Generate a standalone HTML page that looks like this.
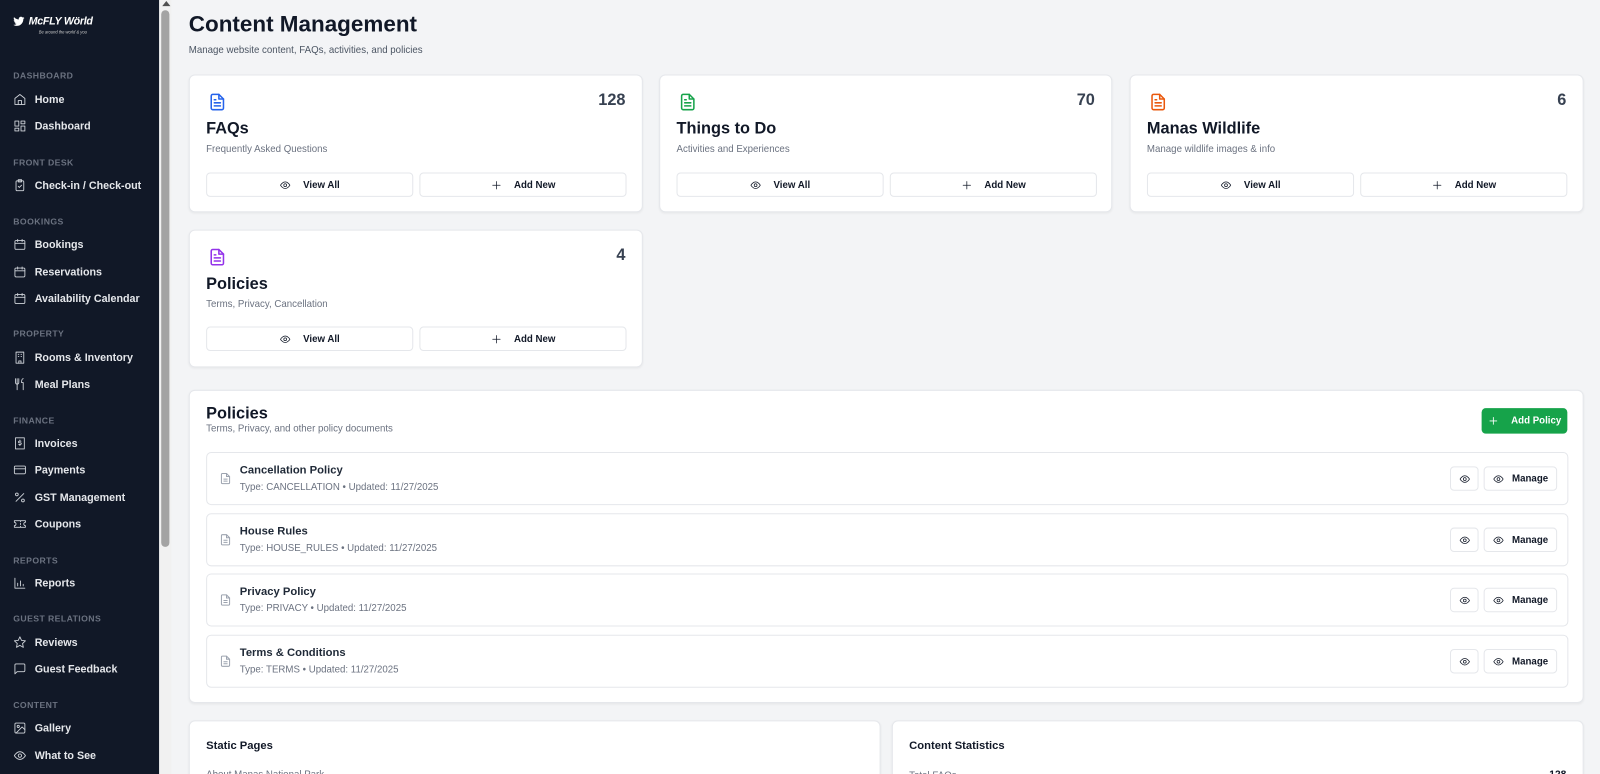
<!DOCTYPE html>
<html><head><meta charset="utf-8"><style>
*{box-sizing:border-box;margin:0;padding:0}
html,body{width:1600px;height:774px;overflow:hidden;background:#f3f4f6}
body{font-family:"Liberation Sans",sans-serif;color:#111827;position:relative}
#w{position:absolute;left:0;top:0;width:1568px;height:760px;transform:scale(1.0204);transform-origin:0 0}
.sb{position:absolute;left:0;top:0;width:156px;height:774px;background:#111827;color:#e5e7eb}
.sec{position:absolute;left:13px;font-size:8.5px;font-weight:700;color:#6b7280;letter-spacing:.4px}
.it{position:absolute;left:13px;font-size:10.5px;font-weight:700;color:#e5e7eb;display:flex;align-items:center;gap:8px}
.it svg{width:13px;height:13px;fill:none;stroke:#d1d5db;stroke-width:1.6;stroke-linecap:round;stroke-linejoin:round}
.scroll{position:absolute;left:156px;top:0;width:12px;height:774px;background:#f1f1f1}
.thumb{position:absolute;left:158px;top:10px;width:8px;height:526px;background:#a3a3a3;border-radius:4px}
.card{position:absolute;background:#fff;border:1px solid #e5e7eb;border-radius:6px;box-shadow:0 1px 2px rgba(0,0,0,.05)}
.num{position:absolute;right:16px;top:16px;font-size:16px;font-weight:700;color:#374151}
.ct{position:absolute;left:16px;top:44px;font-size:16px;font-weight:700}
.cs{position:absolute;left:16px;top:67px;font-size:9.5px;color:#6b7280}
.btn{position:absolute;height:24px;border:1px solid #e5e7eb;border-radius:4px;background:#fff;font-size:9.5px;font-weight:700;display:flex;align-items:center;justify-content:center;gap:12px;color:#111827}
.btn svg{width:11px;height:11px;fill:none;stroke:#111827;stroke-width:1.6;stroke-linecap:round}
.doc{position:absolute;left:18px;top:16px;width:18px;height:20px}
.row{position:absolute;left:16px;width:1335px;height:52px;border:1px solid #e5e7eb;border-radius:5px}
.rt{position:absolute;left:32px;top:11px;font-size:11px;font-weight:700;color:#1f2937}
.rs{position:absolute;left:32px;top:28px;font-size:9.5px;color:#6b7280}
.ri{position:absolute;left:12px;top:18px}
.eb{position:absolute;top:13px;height:24px;border:1px solid #e5e7eb;border-radius:4px;display:flex;align-items:center;justify-content:center;gap:8px;font-size:9.5px;font-weight:700}
.eb svg{width:11px;height:11px;fill:none;stroke:#111827;stroke-width:1.6}
</style></head><body><div id="w">
<div class="sb">
 <div style="position:absolute;left:13px;top:15px;display:flex;align-items:center;gap:4px">
  <svg width="11" height="10" viewBox="0 0 24 20"><path fill="#fff" d="M24 2.4c-.9.4-1.8.7-2.8.8 1-.6 1.8-1.6 2.2-2.7-1 .6-2 1-3.1 1.2C19.3.7 18 0 16.6 0c-2.7 0-4.9 2.200-4.9 4.9 0 .4 0 .8.1 1.1C7.7 5.8 4.1 3.900 1.7.9c-.4.7-.7 1.600-.7 2.500 0 1.700.9 3.200 2.200 4.100-.8 0-1.600-.2-2.200-.6v.1c0 2.400 1.700 4.400 3.900 4.800-.4.1-.8.2-1.300.2-.3 0-.6 0-.9-.1.6 2 2.400 3.400 4.600 3.400-1.700 1.300-3.800 2.100-6.100 2.100H0c2.200 1.400 4.800 2.200 7.500 2.200 9.100 0 14-7.500 14-14v-.6c1-.7 1.800-1.600 2.500-2.600z"/></svg>
  <span style="font-size:10.5px;font-weight:700;font-style:italic;color:#fff;letter-spacing:-.3px">McFLY Wörld</span>
 </div>
 <div style="position:absolute;left:38px;top:29px;font-size:4px;color:#ccc;font-style:italic">Be around the world &amp; you</div>
 <div class="sec" style="top:69px">DASHBOARD</div>
 <div class="it" style="top:91px"><svg viewBox="0 0 24 24"><path d="M3 10l9-7 9 7v11H3z"/><path d="M9 21v-7h6v7"/></svg>Home</div>
 <div class="it" style="top:117px"><svg viewBox="0 0 24 24"><rect x="3" y="3" width="7" height="9"/><rect x="14" y="3" width="7" height="5"/><rect x="14" y="12" width="7" height="9"/><rect x="3" y="16" width="7" height="5"/></svg>Dashboard</div>
 <div class="sec" style="top:154px">FRONT DESK</div>
 <div class="it" style="top:175px"><svg viewBox="0 0 24 24"><rect x="5" y="4" width="14" height="18" rx="2"/><path d="M9 2h6v4H9zM9 14l2 2 4-4"/></svg>Check-in / Check-out</div>
 <div class="sec" style="top:212px">BOOKINGS</div>
 <div class="it" style="top:233px"><svg viewBox="0 0 24 24"><rect x="3" y="5" width="18" height="16" rx="2"/><path d="M8 3v4M16 3v4M3 10h18"/></svg>Bookings</div>
 <div class="it" style="top:260px"><svg viewBox="0 0 24 24"><rect x="3" y="5" width="18" height="16" rx="2"/><path d="M8 3v4M16 3v4M3 10h18"/></svg>Reservations</div>
 <div class="it" style="top:286px"><svg viewBox="0 0 24 24"><rect x="3" y="5" width="18" height="16" rx="2"/><path d="M8 3v4M16 3v4M3 10h18"/></svg>Availability Calendar</div>
 <div class="sec" style="top:322px">PROPERTY</div>
 <div class="it" style="top:344px"><svg viewBox="0 0 24 24"><rect x="5" y="2" width="14" height="20"/><path d="M10 22v-4h4v4M9 6h1M14 6h1M9 10h1M14 10h1"/></svg>Rooms &amp; Inventory</div>
 <div class="it" style="top:370px"><svg viewBox="0 0 24 24"><path d="M4 2v7a3 3 0 006 0V2M7 2v20M18 2c-2 0-3 3-3 7h3v13"/></svg>Meal Plans</div>
 <div class="sec" style="top:407px">FINANCE</div>
 <div class="it" style="top:428px"><svg viewBox="0 0 24 24"><rect x="4" y="2" width="16" height="20"/><path d="M14 8h-3a1.5 1.5 0 000 3h2a1.5 1.5 0 010 3h-3M12 6v2M12 14v2"/></svg>Invoices</div>
 <div class="it" style="top:454px"><svg viewBox="0 0 24 24"><rect x="2" y="5" width="20" height="14" rx="2"/><path d="M2 10h20"/></svg>Payments</div>
 <div class="it" style="top:481px"><svg viewBox="0 0 24 24"><path d="M19 5L5 19"/><circle cx="6.5" cy="6.5" r="2.5"/><circle cx="17.5" cy="17.5" r="2.5"/></svg>GST Management</div>
 <div class="it" style="top:507px"><svg viewBox="0 0 24 24"><path d="M2 9a3 3 0 010 6v3h20v-3a3 3 0 010-6V6H2zM13 6v2M13 16v2M13 11v2"/></svg>Coupons</div>
 <div class="sec" style="top:544px">REPORTS</div>
 <div class="it" style="top:565px"><svg viewBox="0 0 24 24"><path d="M3 3v18h18M8 17v-5M13 17V8M18 17v-3"/></svg>Reports</div>
 <div class="sec" style="top:601px">GUEST RELATIONS</div>
 <div class="it" style="top:623px"><svg viewBox="0 0 24 24"><path d="M12 2l3 6.5 7 .8-5.2 4.8 1.4 7L12 17.5 5.8 21l1.4-7L2 9.3l7-.8z"/></svg>Reviews</div>
 <div class="it" style="top:649px"><svg viewBox="0 0 24 24"><path d="M21 15a2 2 0 01-2 2H7l-4 4V5a2 2 0 012-2h14a2 2 0 012 2z"/></svg>Guest Feedback</div>
 <div class="sec" style="top:686px">CONTENT</div>
 <div class="it" style="top:707px"><svg viewBox="0 0 24 24"><rect x="3" y="3" width="18" height="18" rx="2"/><circle cx="9" cy="9" r="2"/><path d="M21 15l-5-5L5 21"/></svg>Gallery</div>
 <div class="it" style="top:734px"><svg viewBox="0 0 24 24"><path d="M2 12s4-7 10-7 10 7 10 7-4 7-10 7S2 12 2 12z"/><circle cx="12" cy="12" r="3"/></svg>What to See</div>
</div>
<div class="scroll"></div><div class="thumb"></div>
<div style="position:absolute;left:159px;top:1px;width:0;height:0;border-left:4px solid transparent;border-right:4px solid transparent;border-bottom:5px solid #505050"></div>

<div style="position:absolute;left:185px;top:11px;font-size:22px;font-weight:700">Content Management</div>
<div style="position:absolute;left:185px;top:44px;font-size:9.5px;color:#4b5563">Manage website content, FAQs, activities, and policies</div>

<div class="card" style="left:185px;top:73px;width:445px;height:135px">
 <svg class="doc" viewBox="0 0 24 24" fill="none" stroke="#2563eb" stroke-width="2" stroke-linecap="round" stroke-linejoin="round"><path d="M14 2H6a2 2 0 00-2 2v16a2 2 0 002 2h12a2 2 0 002-2V8z"/><path d="M14 2v6h6M8 13h8M8 17h8M8 9h2"/></svg>
 <div class="num">128</div><div class="ct">FAQs</div><div class="cs">Frequently Asked Questions</div>
 <div class="btn" style="left:16px;top:95px;width:203px"><svg viewBox="0 0 24 24"><path d="M2 12s4-7 10-7 10 7 10 7-4 7-10 7S2 12 2 12z"/><circle cx="12" cy="12" r="3"/></svg>View All</div>
 <div class="btn" style="left:225px;top:95px;width:203px"><svg viewBox="0 0 24 24"><path d="M12 4v16M4 12h16"/></svg>Add New</div>
</div>
<div class="card" style="left:646px;top:73px;width:444px;height:135px">
 <svg class="doc" viewBox="0 0 24 24" fill="none" stroke="#16a34a" stroke-width="2" stroke-linecap="round" stroke-linejoin="round"><path d="M14 2H6a2 2 0 00-2 2v16a2 2 0 002 2h12a2 2 0 002-2V8z"/><path d="M14 2v6h6M8 13h8M8 17h8M8 9h2"/></svg>
 <div class="num">70</div><div class="ct">Things to Do</div><div class="cs">Activities and Experiences</div>
 <div class="btn" style="left:16px;top:95px;width:203px"><svg viewBox="0 0 24 24"><path d="M2 12s4-7 10-7 10 7 10 7-4 7-10 7S2 12 2 12z"/><circle cx="12" cy="12" r="3"/></svg>View All</div>
 <div class="btn" style="left:225px;top:95px;width:203px"><svg viewBox="0 0 24 24"><path d="M12 4v16M4 12h16"/></svg>Add New</div>
</div>
<div class="card" style="left:1107px;top:73px;width:445px;height:135px">
 <svg class="doc" viewBox="0 0 24 24" fill="none" stroke="#ea580c" stroke-width="2" stroke-linecap="round" stroke-linejoin="round"><path d="M14 2H6a2 2 0 00-2 2v16a2 2 0 002 2h12a2 2 0 002-2V8z"/><path d="M14 2v6h6M8 13h8M8 17h8M8 9h2"/></svg>
 <div class="num">6</div><div class="ct">Manas Wildlife</div><div class="cs">Manage wildlife images &amp; info</div>
 <div class="btn" style="left:16px;top:95px;width:203px"><svg viewBox="0 0 24 24"><path d="M2 12s4-7 10-7 10 7 10 7-4 7-10 7S2 12 2 12z"/><circle cx="12" cy="12" r="3"/></svg>View All</div>
 <div class="btn" style="left:225px;top:95px;width:203px"><svg viewBox="0 0 24 24"><path d="M12 4v16M4 12h16"/></svg>Add New</div>
</div>
<div class="card" style="left:185px;top:225px;width:445px;height:135px">
 <svg class="doc" viewBox="0 0 24 24" fill="none" stroke="#9333ea" stroke-width="2" stroke-linecap="round" stroke-linejoin="round"><path d="M14 2H6a2 2 0 00-2 2v16a2 2 0 002 2h12a2 2 0 002-2V8z"/><path d="M14 2v6h6M8 13h8M8 17h8M8 9h2"/></svg>
 <div class="num">4</div><div class="ct">Policies</div><div class="cs">Terms, Privacy, Cancellation</div>
 <div class="btn" style="left:16px;top:94px;width:203px"><svg viewBox="0 0 24 24"><path d="M2 12s4-7 10-7 10 7 10 7-4 7-10 7S2 12 2 12z"/><circle cx="12" cy="12" r="3"/></svg>View All</div>
 <div class="btn" style="left:225px;top:94px;width:203px"><svg viewBox="0 0 24 24"><path d="M12 4v16M4 12h16"/></svg>Add New</div>
</div>

<div class="card" style="left:185px;top:382px;width:1367px;height:307px">
 <div style="position:absolute;left:16px;top:14px;font-size:16px;font-weight:700">Policies</div>
 <div style="position:absolute;left:16px;top:32px;font-size:9.5px;color:#6b7280">Terms, Privacy, and other policy documents</div>
 <div style="position:absolute;right:15px;top:17px;width:84px;height:25px;background:#16a34a;border-radius:4px;color:#fff;font-size:9.5px;font-weight:700;display:flex;align-items:center;justify-content:center;gap:12px"><svg width="11" height="11" viewBox="0 0 24 24" fill="none" stroke="#fff" stroke-width="1.8"><path d="M12 4v16M4 12h16"/></svg>Add Policy</div>
 <div class="row" style="top:60px"><svg class="ri" width="12" height="14" viewBox="0 0 24 24" fill="none" stroke="#9ca3af" stroke-width="2"><path d="M14 2H6a2 2 0 00-2 2v16a2 2 0 002 2h12a2 2 0 002-2V8z"/><path d="M14 2v6h6M8 13h8M8 17h8"/></svg><div class="rt">Cancellation Policy</div><div class="rs">Type: CANCELLATION • Updated: 11/27/2025</div>
  <div class="eb" style="left:1218px;width:28px"><svg viewBox="0 0 24 24"><path d="M2 12s4-7 10-7 10 7 10 7-4 7-10 7S2 12 2 12z"/><circle cx="12" cy="12" r="3"/></svg></div>
  <div class="eb" style="left:1251px;width:72px"><svg viewBox="0 0 24 24"><path d="M2 12s4-7 10-7 10 7 10 7-4 7-10 7S2 12 2 12z"/><circle cx="12" cy="12" r="3"/></svg>Manage</div></div>
 <div class="row" style="top:120px"><svg class="ri" width="12" height="14" viewBox="0 0 24 24" fill="none" stroke="#9ca3af" stroke-width="2"><path d="M14 2H6a2 2 0 00-2 2v16a2 2 0 002 2h12a2 2 0 002-2V8z"/><path d="M14 2v6h6M8 13h8M8 17h8"/></svg><div class="rt">House Rules</div><div class="rs">Type: HOUSE_RULES • Updated: 11/27/2025</div>
  <div class="eb" style="left:1218px;width:28px"><svg viewBox="0 0 24 24"><path d="M2 12s4-7 10-7 10 7 10 7-4 7-10 7S2 12 2 12z"/><circle cx="12" cy="12" r="3"/></svg></div>
  <div class="eb" style="left:1251px;width:72px"><svg viewBox="0 0 24 24"><path d="M2 12s4-7 10-7 10 7 10 7-4 7-10 7S2 12 2 12z"/><circle cx="12" cy="12" r="3"/></svg>Manage</div></div>
 <div class="row" style="top:179px"><svg class="ri" width="12" height="14" viewBox="0 0 24 24" fill="none" stroke="#9ca3af" stroke-width="2"><path d="M14 2H6a2 2 0 00-2 2v16a2 2 0 002 2h12a2 2 0 002-2V8z"/><path d="M14 2v6h6M8 13h8M8 17h8"/></svg><div class="rt">Privacy Policy</div><div class="rs">Type: PRIVACY • Updated: 11/27/2025</div>
  <div class="eb" style="left:1218px;width:28px"><svg viewBox="0 0 24 24"><path d="M2 12s4-7 10-7 10 7 10 7-4 7-10 7S2 12 2 12z"/><circle cx="12" cy="12" r="3"/></svg></div>
  <div class="eb" style="left:1251px;width:72px"><svg viewBox="0 0 24 24"><path d="M2 12s4-7 10-7 10 7 10 7-4 7-10 7S2 12 2 12z"/><circle cx="12" cy="12" r="3"/></svg>Manage</div></div>
 <div class="row" style="top:239px"><svg class="ri" width="12" height="14" viewBox="0 0 24 24" fill="none" stroke="#9ca3af" stroke-width="2"><path d="M14 2H6a2 2 0 00-2 2v16a2 2 0 002 2h12a2 2 0 002-2V8z"/><path d="M14 2v6h6M8 13h8M8 17h8"/></svg><div class="rt">Terms &amp; Conditions</div><div class="rs">Type: TERMS • Updated: 11/27/2025</div>
  <div class="eb" style="left:1218px;width:28px"><svg viewBox="0 0 24 24"><path d="M2 12s4-7 10-7 10 7 10 7-4 7-10 7S2 12 2 12z"/><circle cx="12" cy="12" r="3"/></svg></div>
  <div class="eb" style="left:1251px;width:72px"><svg viewBox="0 0 24 24"><path d="M2 12s4-7 10-7 10 7 10 7-4 7-10 7S2 12 2 12z"/><circle cx="12" cy="12" r="3"/></svg>Manage</div></div>
</div>

<div class="card" style="left:185px;top:706px;width:678px;height:80px">
 <div style="position:absolute;left:16px;top:18px;font-size:11px;font-weight:700">Static Pages</div>
 <div style="position:absolute;left:16px;top:47px;font-size:9.5px;color:#6b7280">About Manas National Park</div>
</div>
<div class="card" style="left:874px;top:706px;width:678px;height:80px">
 <div style="position:absolute;left:16px;top:18px;font-size:11px;font-weight:700">Content Statistics</div>
 <div style="position:absolute;left:16px;top:48px;font-size:9.5px;color:#6b7280">Total FAQs</div>
 <div style="position:absolute;right:16px;top:47px;font-size:10px;font-weight:700">128</div>
</div>
</div></body></html>
